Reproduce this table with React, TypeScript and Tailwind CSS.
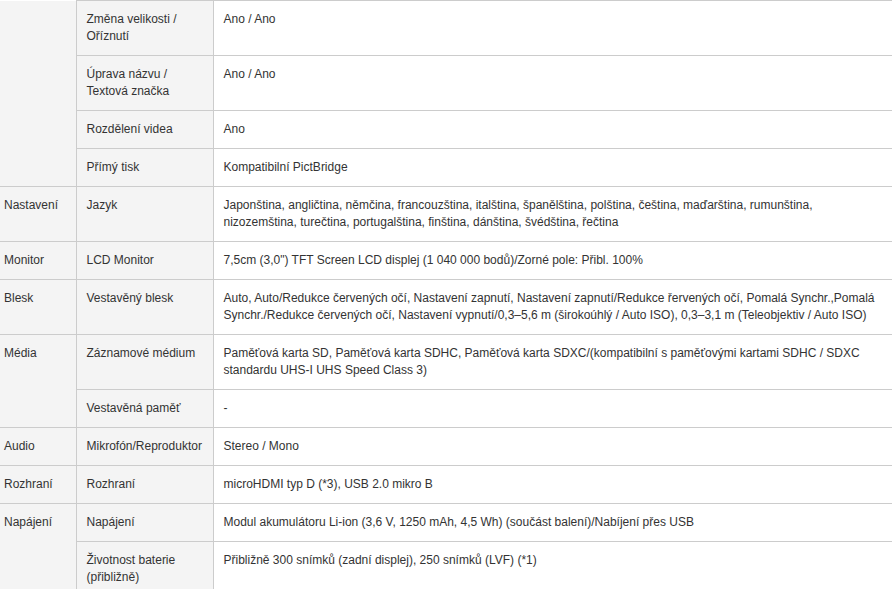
type Row = { label: string; value: string };
type Group = { name: string; rows: Row[]; openTop?: boolean };

const groups: Group[] = [
  {
    name: "",
    openTop: true,
    rows: [
      { label: "Změna velikosti / Oříznutí", value: "Ano / Ano" },
      { label: "Úprava názvu / Textová značka", value: "Ano / Ano" },
      { label: "Rozdělení videa", value: "Ano" },
      { label: "Přímý tisk", value: "Kompatibilní PictBridge" },
    ],
  },
  {
    name: "Nastavení",
    rows: [
      {
        label: "Jazyk",
        value:
          "Japonština, angličtina, němčina, francouzština, italština, španělština, polština, čeština, maďarština, rumunština, nizozemština, turečtina, portugalština, finština, dánština, švédština, řečtina",
      },
    ],
  },
  {
    name: "Monitor",
    rows: [
      {
        label: "LCD Monitor",
        value: "7,5cm (3,0\") TFT Screen LCD displej (1 040 000 bodů)/Zorné pole: Přibl. 100%",
      },
    ],
  },
  {
    name: "Blesk",
    rows: [
      {
        label: "Vestavěný blesk",
        value:
          "Auto, Auto/Redukce červených očí, Nastavení zapnutí, Nastavení zapnutí/Redukce řervených očí, Pomalá Synchr.,Pomalá Synchr./Redukce červených očí, Nastavení vypnutí/0,3–5,6 m (širokoúhlý / Auto ISO), 0,3–3,1 m (Teleobjektiv / Auto ISO)",
      },
    ],
  },
  {
    name: "Média",
    rows: [
      {
        label: "Záznamové médium",
        value:
          "Paměťová karta SD, Paměťová karta SDHC, Paměťová karta SDXC/(kompatibilní s paměťovými kartami SDHC / SDXC standardu UHS-I UHS Speed Class 3)",
      },
      { label: "Vestavěná paměť", value: "-" },
    ],
  },
  {
    name: "Audio",
    rows: [{ label: "Mikrofón/Reproduktor", value: "Stereo / Mono" }],
  },
  {
    name: "Rozhraní",
    rows: [{ label: "Rozhraní", value: "microHDMI typ D (*3), USB 2.0 mikro B" }],
  },
  {
    name: "Napájení",
    rows: [
      {
        label: "Napájení",
        value: "Modul akumulátoru Li-ion (3,6 V, 1250 mAh, 4,5 Wh) (součást balení)/Nabíjení přes USB",
      },
      {
        label: "Životnost baterie (přibližně)",
        value: "Přibližně 300 snímků (zadní displej), 250 snímků (LVF) (*1)",
      },
    ],
  },
];

export default function App() {
  return (
    <div className="w-[892px] h-[589px] overflow-hidden bg-white font-['Liberation_Sans',Arial,sans-serif] text-[12px] leading-[17px] text-[#333]">
      <table className="w-[902px] table-fixed border-collapse">
        <colgroup>
          <col className="w-[76px]" />
          <col className="w-[137px]" />
          <col />
        </colgroup>
        <tbody>
          {groups.map((g) =>
            g.rows.map((r, i) => (
              <tr key={g.name + r.label}>
                {i === 0 && (
                  <td
                    rowSpan={g.rows.length}
                    className={`align-top bg-[#f4f4f4] border-r border-b border-[#ccc] pl-[4px] pr-2 py-[10px] ${
                      g.openTop ? "" : "border-t"
                    }`}
                  >
                    {g.name}
                  </td>
                )}
                <td className="align-top bg-[#f4f4f4] border border-[#ccc] px-[10px] py-[10px]">{r.label}</td>
                <td className="align-top bg-white border-t border-b border-[#ccc] pl-[10px] pr-[20px] py-[10px]">
                  {r.value}
                </td>
              </tr>
            ))
          )}
        </tbody>
      </table>
    </div>
  );
}
